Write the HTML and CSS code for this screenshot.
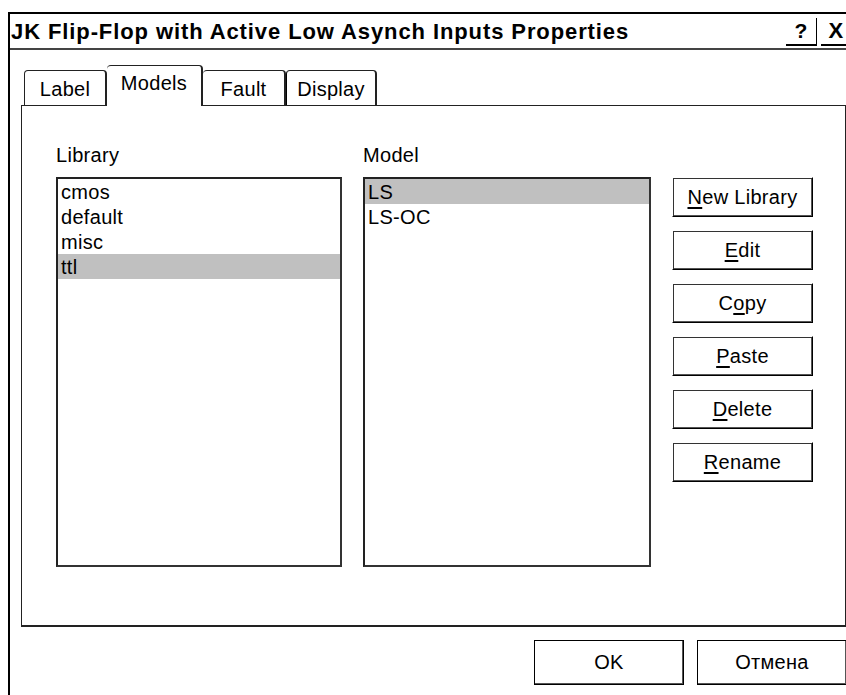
FILE: index.html
```html
<!DOCTYPE html>
<html>
<head>
<meta charset="utf-8">
<link rel="stylesheet" href="styles.css">
</head>
<body>
<div class="window">
  <div class="titlebar">
    <div class="title">JK Flip-Flop with Active Low Asynch Inputs Properties</div>
    <div class="tbtn help">?</div>
    <div class="tbtn close">X</div>
  </div>
  <div class="client">
    <div class="tabs">
      <div class="tab t-label">Label</div>
      <div class="tab t-models active">Models</div>
      <div class="tab t-fault">Fault</div>
      <div class="tab t-display">Display</div>
    </div>
    <div class="panel">
      <div class="grid">
        <div class="caption">Library</div>
        <div class="caption">Model</div>
        <div></div>
        <div class="listbox">
          <div class="item">cmos</div>
          <div class="item">default</div>
          <div class="item">misc</div>
          <div class="item sel">ttl</div>
        </div>
        <div class="listbox">
          <div class="item sel">LS</div>
          <div class="item">LS-OC</div>
        </div>
        <div class="buttons">
          <div class="btn"><u>N</u>ew Library</div>
          <div class="btn"><u>E</u>dit</div>
          <div class="btn">C<u>o</u>py</div>
          <div class="btn"><u>P</u>aste</div>
          <div class="btn"><u>D</u>elete</div>
          <div class="btn"><u>R</u>ename</div>
        </div>
      </div>
    </div>
    <div class="footer">
      <div class="btn big">OK</div>
      <div class="btn big">Отмена</div>
    </div>
  </div>
</div>
</body>
</html>
```
FILE: styles.css
```css
html, body {
  margin: 0;
  padding: 0;
  background: #fff;
  overflow: hidden;
}
body {
  font-family: "Liberation Sans", Arial, sans-serif;
  font-size: 20px;
  letter-spacing: 0.3px;
  color: #000;
}
.window {
  margin: 12px 0 0 8px;
  width: 850px;
  height: 700px;
  border-top: 2px solid #000;
  border-left: 2px solid #000;
  box-sizing: border-box;
}
.titlebar {
  height: 36px;
  display: flex;
  align-items: center;
  border-bottom: 2px solid #444;
  box-sizing: border-box;
  padding-left: 1px;
}
.title {
  flex: 1;
  font-weight: bold;
  font-size: 22px;
  letter-spacing: 0.9px;
  padding-top: 2px;
}
.tbtn {
  width: 31px;
  height: 28px;
  border-right: 1px solid #000;
  border-bottom: 2px solid #000;
  box-sizing: border-box;
  text-align: center;
  font-weight: bold;
  font-size: 21px;
  line-height: 26px;
  margin-top: 2px;
}
.help { margin-right: 4px; }
.close { margin-right: 6px; font-size: 22px; }
.client {
  padding: 15px 11px 0 11px;
}
.tabs {
  display: flex;
  align-items: flex-end;
  height: 40px;
  padding-left: 3px;
  position: relative;
  z-index: 1;
}
.tab {
  height: 35px;
  box-sizing: border-box;
  border: 1px solid #222;
  border-bottom: none;
  border-right: 2px solid #222;
  border-radius: 4px 4px 0 0;
  text-align: center;
  line-height: 36px;
  background: #fff;
}
.t-label { width: 83px; }
.t-models { width: 96px; }
.t-fault { width: 83px; }
.t-display { width: 91px; }
.tab.active {
  height: 41px;
  margin-bottom: -1px;
  line-height: 34px;
  border-left: none;
}
.tab.t-fault { border-left: none; }
.tab.t-display { border-left: 1px solid #000; }
.panel {
  height: 522px;
  box-sizing: border-box;
  border-top: 1px solid #222;
  border-left: 1px solid #222;
  border-right: 2px solid #222;
  border-bottom: 2px solid #222;
  padding: 38px 0 0 34px;
}
.grid {
  display: grid;
  grid-template-columns: 286px 288px 141px;
  grid-template-rows: 22px 390px;
  column-gap: 21px;
  row-gap: 11px;
}
.caption {
  line-height: 22px;
}
.listbox {
  border: 2px solid #222;
  border-right-color: #333;
  border-bottom-color: #333;
  box-sizing: border-box;
}
.item {
  height: 25px;
  line-height: 26px;
  padding-left: 3px;
}
.item.sel {
  background: #c0c0c0;
}
.buttons {
  display: flex;
  flex-direction: column;
  gap: 13px;
}
.btn {
  height: 40px;
  box-sizing: border-box;
  border: 1px solid;
  border-color: #fff #000 #000 #fff;
  box-shadow: inset 1px 1px #333, inset -1px -1px #555;
  display: flex;
  align-items: center;
  justify-content: center;
}
.btn u { text-underline-offset: 3px; }
.footer {
  display: flex;
  justify-content: flex-end;
  gap: 13px;
  padding-top: 13px;
}
.btn.big {
  width: 150px;
  height: 45px;
  border-color: #000;
  box-shadow: inset -1px -1px #555;
}
```
